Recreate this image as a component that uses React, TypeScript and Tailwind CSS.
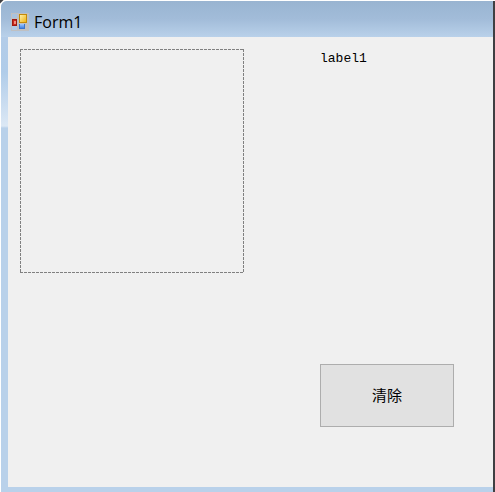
function FormIcon() {
  return (
    <svg className="size-[18px] shrink-0" viewBox="0 0 18 18" aria-hidden="true" shapeRendering="crispEdges">
      <defs>
        <linearGradient id="gold" x1="0" y1="0" x2="1" y2="1">
          <stop offset="0" stopColor="#fff0a8" />
          <stop offset="1" stopColor="#f0b414" />
        </linearGradient>
        <linearGradient id="sky" x1="0" y1="0" x2="0" y2="1">
          <stop offset="0" stopColor="#a4c8fa" />
          <stop offset="1" stopColor="#3f82e4" />
        </linearGradient>
      </defs>
      <rect width="18" height="18" fill="#bfc0c2" />
      <rect x="1" y="1" width="5" height="4" fill="#a9c3de" />
      <rect x="1" y="13" width="5" height="4" fill="#b0cae5" />
      <rect x="1" y="6" width="5" height="7" fill="#9c1a10" />
      <rect x="2" y="7" width="3" height="5" fill="#c9281b" />
      <rect x="3" y="8" width="2" height="3" fill="#f08a78" />
      <rect x="8" y="1" width="8" height="9" fill="#c48a08" />
      <rect x="9" y="2" width="6" height="7" fill="url(#gold)" />
      <rect x="8" y="11" width="6" height="5" fill="#3a74cc" />
      <rect x="9" y="11" width="4" height="4" fill="url(#sky)" />
    </svg>
  );
}

export default function App() {
  return (
    <div className="flex min-h-screen flex-col bg-white bg-[linear-gradient(135deg,#3f3f42_0_2px,transparent_3px)] pt-px pl-px font-['Open_Sans','Noto_Sans_CJK_SC',sans-serif] text-black">
      <div className="flex grow flex-col rounded-tl-md border-r-2 border-[#3f3f42] bg-[#b9d1ea]">
        <header className="flex h-9 items-center gap-[5px] rounded-tl-md bg-linear-to-b from-[#99b4d1] via-[#a2bcd9] to-[#b9d1ea] pt-1.5 pl-[10px]">
          <FormIcon />
          <h1 className="text-[16px] leading-5">Form1</h1>
        </header>
        <div className="flex grow bg-[linear-gradient(to_bottom,#b3cce8_0px,#b0cce9_35px,#dce8f5_89px,#b9d1ea_91px)] pb-[5px] pl-[7px]">
          <main className="flex grow items-start justify-between bg-[#f0f0f0] pt-3 pr-[39px] pl-3">
            <div className="size-56 shrink-0 bg-[repeating-linear-gradient(to_right,#808080_0_3px,transparent_3px_4px),repeating-linear-gradient(to_right,#808080_0_3px,transparent_3px_4px),repeating-linear-gradient(to_bottom,#808080_0_3px,transparent_3px_4px),repeating-linear-gradient(to_bottom,#808080_0_3px,transparent_3px_4px)] bg-[size:100%_1px,100%_1px,1px_100%,1px_100%] bg-[position:top,bottom,left,right] bg-no-repeat" />
            <div className="flex w-[134px] shrink-0 flex-col gap-[295px]">
              <span className="h-5 font-['Liberation_Mono','Noto_Sans_CJK_SC',monospace] text-[13px] leading-5">label1</span>
              <button type="button" className="h-[63px] border border-[#adadad] bg-[#e1e1e1] pb-0.5 text-[15px] leading-5">
                清除
              </button>
            </div>
          </main>
        </div>
      </div>
    </div>
  );
}
